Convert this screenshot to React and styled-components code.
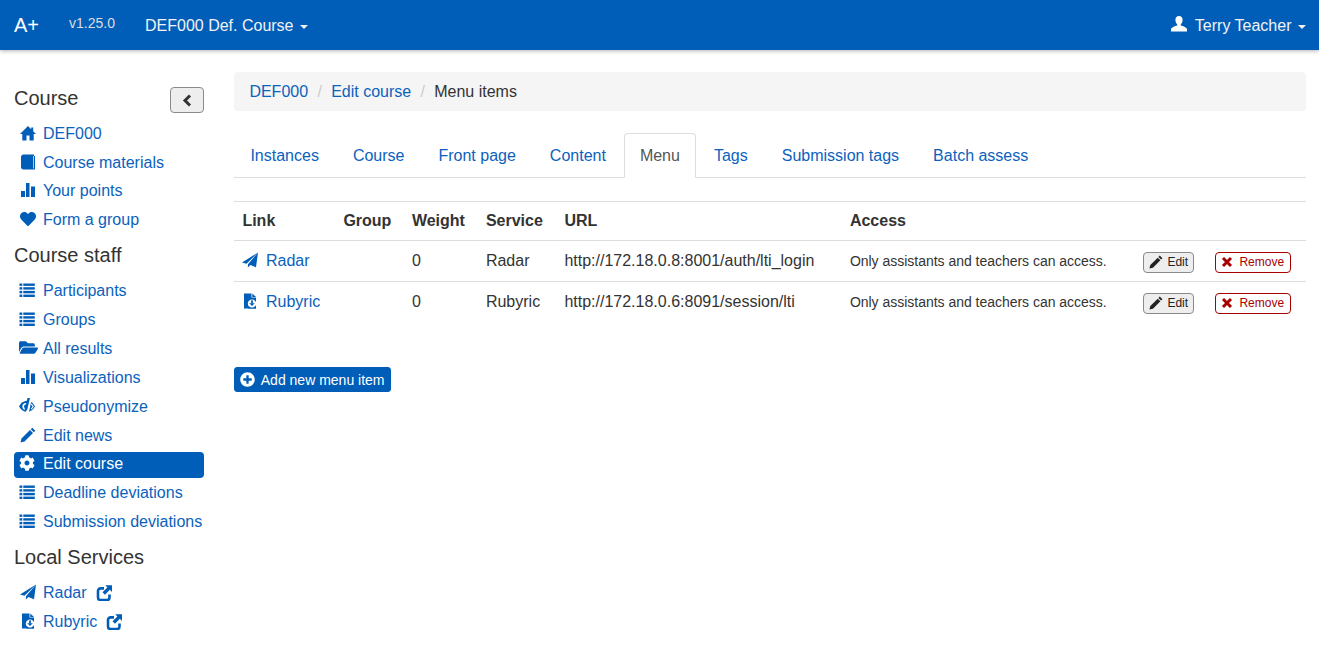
import React from "react";
import styled, { createGlobalStyle } from "styled-components";
import { FaHeart, FaFolderOpen, FaCog, FaPlusCircle } from "react-icons/fa";

const GlobalStyle = createGlobalStyle`
    html, body {
        margin: 0;
        padding: 0;
        background: #fff;
    }
    body {
        font-family: "Liberation Sans", Arial, sans-serif;
        font-size: 16px;
        line-height: 1.42857;
        color: #333;
    }
    * {
        box-sizing: border-box;
    }
`;

const BLUE = "#005eb8";
const LINK = "#0b62bd";

const Navbar = styled.header`
    height: 50px;
    background: ${BLUE};
    box-shadow: 0 1px 4px rgba(0, 0, 0, 0.3);
    display: flex;
    align-items: center;
    padding: 0 13px 0 14px;
    color: #f2f2f2;
`;
const Brand = styled.span`
    font-size: 20px;
    color: #fff;
    width: 55px;
`;
const Version = styled.span`
    font-size: 14px;
    color: #ddd;
    width: 76px;
    padding-bottom: 2px;
`;
const NavItem = styled.span`
    display: flex;
    align-items: center;
    padding-top: 2px;
    margin-left: ${(p) => (p.$right ? "auto" : "0")};
`;
const UserSlot = styled.span`
    display: flex;
    width: 24px;
    margin-top: -4px;
    color: #fff;
`;
const Caret = styled.span`
    display: inline-block;
    width: 0;
    height: 0;
    margin-left: 6.5px;
    margin-top: 1px;
    border-top: 4px solid currentColor;
    border-left: 4px solid transparent;
    border-right: 4px solid transparent;
`;
const Layout = styled.div`
    display: flex;
    align-items: flex-start;
    padding: 22px 13px 0 14px;
`;
const Sidebar = styled.nav`
    width: 190px;
    flex: none;
    margin-right: 30.4px;
`;
const SideTitleRow = styled.div`
    display: flex;
    justify-content: space-between;
    align-items: flex-start;
    margin-top: 15px;
    margin-bottom: 6.75px;
`;
const SideTitle = styled.h4`
    font-size: 20px;
    font-weight: 400;
    line-height: 22px;
    margin: ${(p) => p.$top}px 0 ${(p) => p.$bottom}px;
    ${SideTitleRow} & {
        margin: 0;
    }
`;
const CollapseButton = styled.button`
    width: 34px;
    height: 26px;
    padding: 0;
    display: flex;
    align-items: center;
    justify-content: center;
    background: #eee;
    border: 1px solid #8a8a8a;
    border-radius: 4px;
    color: #333;
`;
const SideList = styled.ul`
    list-style: none;
    margin: 0;
    padding: 0;
`;
const SideItem = styled.li`
    height: 28.857px;
    display: flex;
    align-items: center;
`;
const SideLink = styled.a`
    flex: 1;
    height: 26px;
    display: flex;
    align-items: center;
    padding-left: 6px;
    border-radius: 4px;
    color: ${(p) => (p.$active ? "#fff" : LINK)};
    background: ${(p) => (p.$active ? BLUE : "transparent")};
    white-space: nowrap;
`;
const IconSlot = styled.span`
    width: 23px;
    flex: none;
    display: flex;
    align-items: center;
    margin-top: -3px;
    color: ${(p) => (p.$active ? "#fff" : BLUE)};
`;
const ShareSlot = styled.span`
    display: flex;
    margin-left: 9px;
    margin-top: -2px;
    color: ${BLUE};
`;
const Main = styled.main`
    flex: 1;
    min-width: 0;
`;
const Breadcrumb = styled.ol`
    list-style: none;
    display: flex;
    margin: 0 0 22px;
    padding: 9px 15px 7px;
    background: #f5f5f5;
    border-radius: 4px;
`;
const Crumb = styled.li`
    color: ${(p) => (p.$link ? LINK : "#333")};
    &:not(:first-child)::before {
        content: "/";
        color: #ccc;
        padding: 0 9.3px;
    }
`;
const Tabs = styled.ul`
    list-style: none;
    display: flex;
    margin: 0 0 23px;
    padding: 0;
    border-bottom: 1px solid #ddd;
`;
const Tab = styled.li`
    margin-right: 2px;
    margin-bottom: -1px;
    padding: 11px 15px 9px;
    border: 1px solid ${(p) => (p.$active ? "#ddd" : "transparent")};
    border-bottom-color: ${(p) => (p.$active ? "#fff" : "transparent")};
    border-radius: 4px 4px 0 0;
    color: ${(p) => (p.$active ? "#555" : LINK)};
    background: ${(p) => (p.$active ? "#fff" : "transparent")};
`;
const Table = styled.table`
    width: 100%;
    table-layout: fixed;
    border-collapse: collapse;
    margin-bottom: 45px;
`;
const Th = styled.th`
    text-align: left;
    font-weight: 700;
    padding: 2px 8px 0;
    height: 39px;
    border-top: 1px solid #ddd;
`;
const Td = styled.td`
    padding: ${(p) => (p.$small ? 3 : 1)}px 8px 0;
    height: 41px;
    border-top: 1px solid #ddd;
    vertical-align: middle;
    font-size: ${(p) => (p.$small ? "14px" : "16px")};
    letter-spacing: ${(p) => (p.$small ? "-0.02px" : "normal")};
`;
const ButtonCell = styled.td`
    padding: 0 8px;
    height: 41px;
    border-top: 1px solid #ddd;
    vertical-align: middle;
`;
const RowLink = styled.a`
    display: flex;
    align-items: center;
    color: ${LINK};
`;
const RowIcon = styled.span`
    display: flex;
    width: 23.6px;
    flex: none;
    margin-top: -2px;
    color: ${BLUE};
`;
const SmallButton = styled.button`
    display: flex;
    align-items: center;
    height: 21px;
    padding: 0 ${(p) => (p.$danger ? 6 : 5)}px 0 5px;
    margin-top: 3px;
    font-family: inherit;
    font-size: 12px;
    line-height: 1;
    border-radius: 4px;
    border: 1px solid ${(p) => (p.$danger ? "#a80000" : "#8a8a8a")};
    background: ${(p) => (p.$danger ? "#fff" : "#eee")};
    color: ${(p) => (p.$danger ? "#a80000" : "#222")};
    white-space: nowrap;
`;
const ButtonIcon = styled.span`
    display: flex;
    margin-right: ${(p) => p.$gap}px;
`;
const AddButton = styled.button`
    display: inline-flex;
    align-items: center;
    height: 25px;
    padding: 0 5px;
    font-family: inherit;
    font-size: 14px;
    color: #fff;
    background: ${BLUE};
    border: 1px solid ${BLUE};
    border-radius: 3px;
`;
const AddIcon = styled.span`
    display: flex;
    font-size: 15px;
    margin-right: 5.4px;
`;
const GlyphSvg = styled.svg`
    flex: none;
    margin-left: ${(p) => p.$shift || 0}px;
`;
const FolderIcon = styled(FaFolderOpen)`
    margin-left: -1px;
`;
const CogIcon = styled(FaCog)`
    margin-left: -1px;
`;

function Glyph({ size = 16, shift, children }) {
    return (
        <GlyphSvg width={size} height={size} viewBox="0 0 16 16" fill="currentColor" $shift={shift}>
            {children}
        </GlyphSvg>
    );
}

const HomeIcon = () => (
    <Glyph>
        <path d="M8 1L0 9h2.300v6.500h4.200V10.500h3V15.500h4.200V9H16l-2.800-2.800V2.500h-2v1.700z" />
    </Glyph>
);

const BookIcon = () => (
    <Glyph>
        <path d="M3.500 0.500H14v1.500h1v13.500H3.500C2 15.500 1 14.500 1 13V3C1 1.500 2 0.500 3.500 0.500z" />
        <path d="M13.500 2v12.500" stroke="#fff" strokeWidth="0.7" />
    </Glyph>
);

const BarsIcon = () => (
    <Glyph>
        <rect x="1" y="9" width="4" height="6" />
        <rect x="6" y="1" width="3.500" height="14" />
        <rect x="11" y="4.500" width="4" height="10.500" />
    </Glyph>
);

const ListIcon = () => (
    <Glyph shift={-1}>
        {[1.500, 5.200, 8.900, 12.600].map((y) => (
            <g key={y}>
                <rect x="0.500" y={y} width="2.800" height="2.400" />
                <rect x="4.300" y={y} width="11.500" height="2.400" />
            </g>
        ))}
    </Glyph>
);

const EyeIcon = () => (
    <Glyph shift={-1}>
        <path d="M0 8.500C1.800 5 4.800 2.800 8 2.800c3.200 0 6.200 2.200 8 5.700-1.800 3.500-4.800 5.200-8 5.200-3.200 0-6.200-1.700-8-5.200z" />
        <ellipse cx="7" cy="8.500" rx="3.600" ry="3.500" fill="#fff" />
        <circle cx="7" cy="8.500" r="2" />
        <path d="M11.500 0L8 16" stroke="#fff" strokeWidth="3" />
        <path d="M11 0L8 12.500 5.500 11.500 8.500 0z" />
        <path d="M12.200 5.800L14.200 8.500l-2 2.700" stroke="#fff" strokeWidth="1.100" fill="none" />
    </Glyph>
);

const PencilIcon = ({ size = 16 }) => (
    <Glyph size={size}>
        <path d="M12.300 0.700l3 3-1.500 1.500-3-3z" />
        <path d="M10 3l3 3-8.500 8.500L0.500 15.500l1-4z" />
    </Glyph>
);

const SendIcon = () => (
    <Glyph>
        <path d="M16 0.500L0 10.500l4.500 1.300L16 0.500z" />
        <path d="M16 0.500L6 12.200l-0.200 3.300 2.600-2.500 5.600 2.200L16 0.500z" />
    </Glyph>
);

const SaveFileIcon = () => (
    <Glyph>
        <path d="M2 0.500h7.500v4h4.500v11H2z" />
        <path d="M10.300 0.500l3.700 3.400h-3.700z" />
        <circle cx="10" cy="10.800" r="4.200" fill="#fff" />
        <rect x="9.100" y="7.400" width="1.800" height="3" />
        <path d="M7.200 10.200h5.600L10 13z" />
        <path d="M6 13.500h1.500l1 1h3l1-1H14v2H6z" />
    </Glyph>
);

const ShareIcon = () => (
    <Glyph>
        <path d="M8 3.400H4.600C3 3.400 2 4.400 2 6v6.400C2 14 3 15 4.600 15H11c1.500 0 2.500-1 2.500-2.500V9.500" fill="none" stroke="currentColor" strokeWidth="2.600" />
        <path d="M9.300 0.300H16V7l-2.200-2.200-4.800 4.900-2.500-2.500 4.900-4.800z" />
    </Glyph>
);

const UserIcon = () => (
    <Glyph>
        <path d="M8 0c2.200 0 3.600 1.600 3.600 4 0 1.800-.8 3.400-1.800 4.200v1.400c2.400.8 5 1.600 6.200 3.200V15.500H0v-2.700c1.200-1.600 3.800-2.400 6.200-3.200V8.200C5.200 7.400 4.400 5.800 4.400 4 4.400 1.600 5.800 0 8 0z" />
    </Glyph>
);

const ChevronIcon = () => (
    <svg width="10" height="13" viewBox="0 0 10 13">
        <path d="M8 1.500L3 6.500l5 5" fill="none" stroke="currentColor" strokeWidth="3" />
    </svg>
);

const RemoveIcon = () => (
    <svg width="12" height="12" viewBox="0 0 12 12">
        <path d="M2 2l8 8M10 2l-8 8" fill="none" stroke="currentColor" strokeWidth="3" />
    </svg>
);

const courseLinks = [
    { label: "DEF000", icon: <HomeIcon /> },
    { label: "Course materials", icon: <BookIcon /> },
    { label: "Your points", icon: <BarsIcon /> },
    { label: "Form a group", icon: <FaHeart size={16} /> },
];

const staffLinks = [
    { label: "Participants", icon: <ListIcon /> },
    { label: "Groups", icon: <ListIcon /> },
    { label: "All results", icon: <FolderIcon size={19} /> },
    { label: "Visualizations", icon: <BarsIcon /> },
    { label: "Pseudonymize", icon: <EyeIcon /> },
    { label: "Edit news", icon: <PencilIcon /> },
    { label: "Edit course", icon: <CogIcon size={16} />, active: true },
    { label: "Deadline deviations", icon: <ListIcon /> },
    { label: "Submission deviations", icon: <ListIcon /> },
];

const serviceLinks = [
    { label: "Radar", icon: <SendIcon />, external: true },
    { label: "Rubyric", icon: <SaveFileIcon />, external: true },
];

const tabs = ["Instances", "Course", "Front page", "Content", "Menu", "Tags", "Submission tags", "Batch assess"];

const menuItems = [
    { name: "Radar", icon: <SendIcon />, weight: 0, url: "http://172.18.0.8:8001/auth/lti_login" },
    { name: "Rubyric", icon: <SaveFileIcon />, weight: 0, url: "http://172.18.0.6:8091/session/lti" },
];

function SideLinks({ links }) {
    return (
        <SideList>
            {links.map((l) => (
                <SideItem key={l.label}>
                    <SideLink $active={l.active}>
                        <IconSlot $active={l.active}>{l.icon}</IconSlot>
                        {l.label}
                        {l.external && (
                            <ShareSlot>
                                <ShareIcon />
                            </ShareSlot>
                        )}
                    </SideLink>
                </SideItem>
            ))}
        </SideList>
    );
}

export default function App() {
    return (
        <>
            <GlobalStyle />
            <Navbar>
                <Brand>A+</Brand>
                <Version>v1.25.0</Version>
                <NavItem>
                    DEF000 Def. Course
                    <Caret />
                </NavItem>
                <NavItem $right>
                    <UserSlot>
                        <UserIcon />
                    </UserSlot>
                    Terry Teacher
                    <Caret />
                </NavItem>
            </Navbar>
            <Layout>
                <Sidebar>
                    <SideTitleRow>
                        <SideTitle>Course</SideTitle>
                        <CollapseButton>
                            <ChevronIcon />
                        </CollapseButton>
                    </SideTitleRow>
                    <SideLinks links={courseLinks} />
                    <SideTitle $top={9} $bottom={11.25}>Course staff</SideTitle>
                    <SideLinks links={staffLinks} />
                    <SideTitle $top={9} $bottom={11.5}>Local Services</SideTitle>
                    <SideLinks links={serviceLinks} />
                </Sidebar>
                <Main>
                    <Breadcrumb>
                        <Crumb $link>DEF000</Crumb>
                        <Crumb $link>Edit course</Crumb>
                        <Crumb>Menu items</Crumb>
                    </Breadcrumb>
                    <Tabs>
                        {tabs.map((t) => (
                            <Tab key={t} $active={t === "Menu"}>
                                {t}
                            </Tab>
                        ))}
                    </Tabs>
                    <Table>
                        <colgroup>
                            <col width="101" />
                            <col width="68.5" />
                            <col width="74" />
                            <col width="78.5" />
                            <col width="285.5" />
                            <col width="293.5" />
                            <col width="72" />
                            <col width="99" />
                        </colgroup>
                        <thead>
                            <tr>
                                <Th>Link</Th>
                                <Th>Group</Th>
                                <Th>Weight</Th>
                                <Th>Service</Th>
                                <Th>URL</Th>
                                <Th>Access</Th>
                                <Th />
                                <Th />
                            </tr>
                        </thead>
                        <tbody>
                            {menuItems.map((m) => (
                                <tr key={m.name}>
                                    <Td>
                                        <RowLink>
                                            <RowIcon>{m.icon}</RowIcon>
                                            {m.name}
                                        </RowLink>
                                    </Td>
                                    <Td />
                                    <Td>{m.weight}</Td>
                                    <Td>{m.name}</Td>
                                    <Td>{m.url}</Td>
                                    <Td $small>Only assistants and teachers can access.</Td>
                                    <ButtonCell>
                                        <SmallButton>
                                            <ButtonIcon $gap={4}>
                                                <PencilIcon size={14} />
                                            </ButtonIcon>
                                            Edit
                                        </SmallButton>
                                    </ButtonCell>
                                    <ButtonCell>
                                        <SmallButton $danger>
                                            <ButtonIcon $gap={6}>
                                                <RemoveIcon />
                                            </ButtonIcon>
                                            Remove
                                        </SmallButton>
                                    </ButtonCell>
                                </tr>
                            ))}
                        </tbody>
                    </Table>
                    <AddButton>
                        <AddIcon>
                            <FaPlusCircle />
                        </AddIcon>
                        Add new menu item
                    </AddButton>
                </Main>
            </Layout>
        </>
    );
}
